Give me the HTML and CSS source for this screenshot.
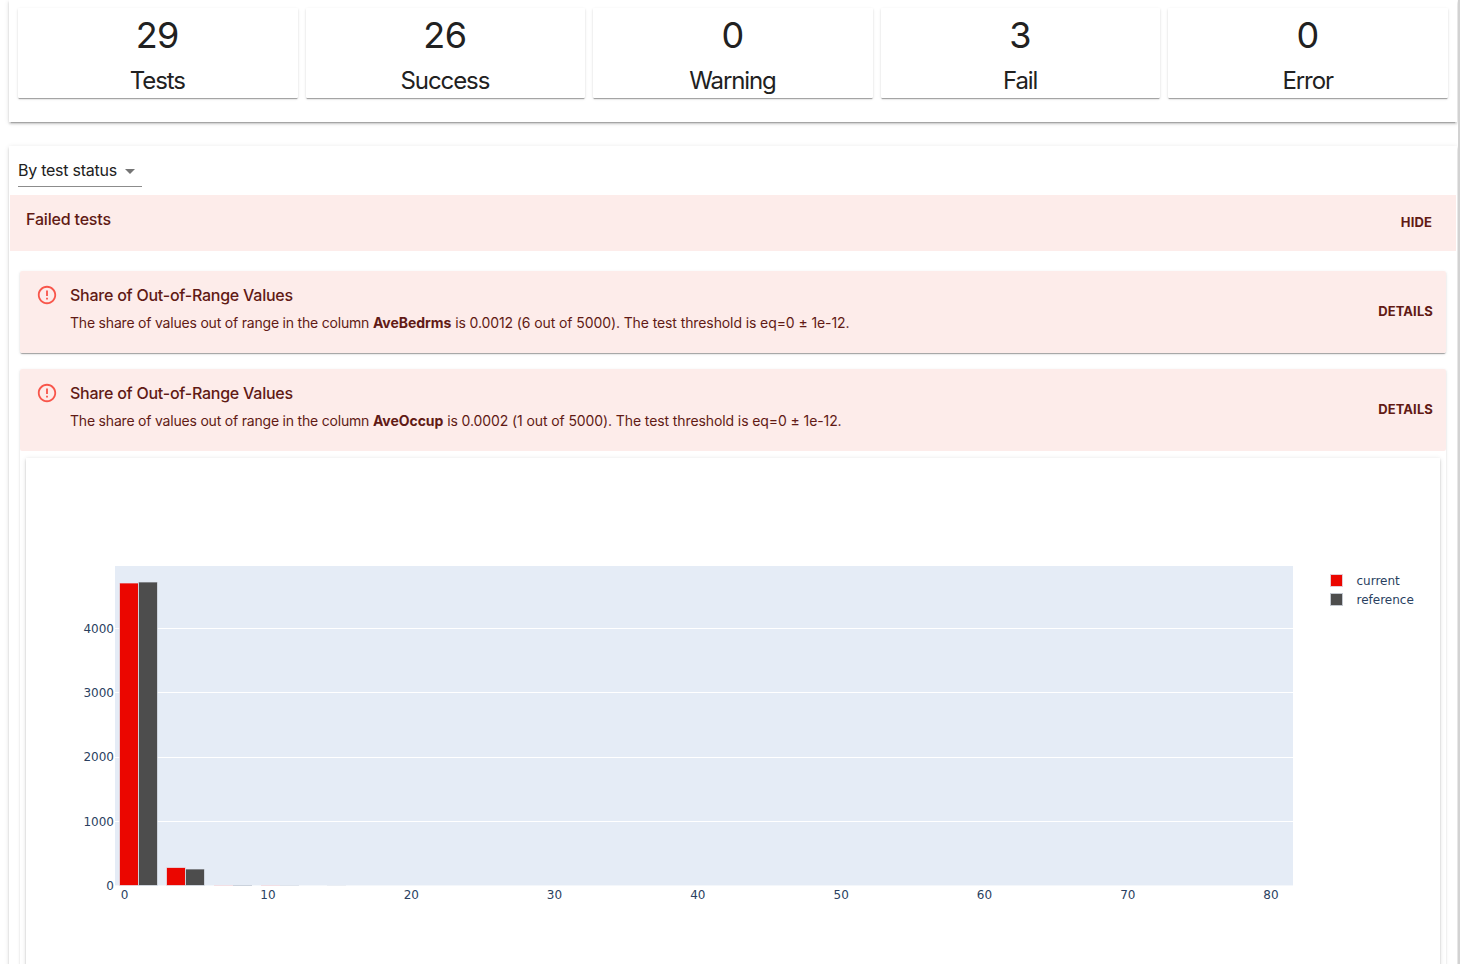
FILE: index.html
```html
<!DOCTYPE html>
<html lang="en">
<head>
<meta charset="utf-8">
<title>Test suite</title>
<link rel="stylesheet" href="styles.css">
</head>
<body>
<div class="page">
  <section class="paper summary">
    <div class="stat"><div class="num">29</div><div class="label">Tests</div></div>
    <div class="stat"><div class="num">26</div><div class="label">Success</div></div>
    <div class="stat"><div class="num">0</div><div class="label">Warning</div></div>
    <div class="stat"><div class="num">3</div><div class="label">Fail</div></div>
    <div class="stat"><div class="num">0</div><div class="label">Error</div></div>
  </section>
  <section class="paper results">
    <div class="select"><span>By test status</span><svg class="caret" width="24" height="24" viewBox="0 0 24 24"><path d="M7 10l5 5 5-5z" fill="#757575"/></svg></div>
    <div class="group-head"><span class="group-title">Failed tests</span><span class="action">HIDE</span></div>
    <div class="tests">
      <article class="test">
        <div class="alert">
          <svg class="icon" width="22" height="22" viewBox="0 0 24 24"><path fill="#f8564b" d="M11 15h2v2h-2zm0-8h2v6h-2zm.99-5C6.47 2 2 6.48 2 12s4.47 10 9.99 10C17.52 22 22 17.52 22 12S17.52 2 11.99 2zM12 20c-4.42 0-8-3.58-8-8s3.58-8 8-8 8 3.58 8 8-3.58 8-8 8z"/></svg>
          <div class="message"><div class="title">Share of Out-of-Range Values</div><div class="desc"><span class="lead">The share of values out of range in the column </span><b>AveBedrms</b> is 0.0012 (6 out of 5000). The test threshold is eq=0 ± 1e-12.</div></div>
          <span class="action">DETAILS</span>
        </div>
      </article>
      <article class="test open">
        <div class="alert">
          <svg class="icon" width="22" height="22" viewBox="0 0 24 24"><path fill="#f8564b" d="M11 15h2v2h-2zm0-8h2v6h-2zm.99-5C6.47 2 2 6.48 2 12s4.47 10 9.99 10C17.52 22 22 17.52 22 12S17.52 2 11.99 2zM12 20c-4.42 0-8-3.58-8-8s3.58-8 8-8 8 3.58 8 8-3.58 8-8 8z"/></svg>
          <div class="message"><div class="title">Share of Out-of-Range Values</div><div class="desc"><span class="lead">The share of values out of range in the column </span><b>AveOccup</b> is 0.0002 (1 out of 5000). The test threshold is eq=0 ± 1e-12.</div></div>
          <span class="action">DETAILS</span>
        </div>
        <div class="plot">
          <svg class="chart" width="1414" height="600" viewBox="26 458 1414 600">
            <rect x="115" y="566" width="1178" height="319" fill="#e5ecf6"/>
            <path d="M115 628.5H1293M115 692.5H1293M115 757.5H1293M115 821.5H1293" stroke="#fff"/>
            <path d="M115 885.5H1293" stroke="#f4f7fb"/>
            <g stroke="#e5ecf6" stroke-opacity=".7">
              <rect x="119.5" y="583" width="19" height="302.5" fill="#eb0600"/>
              <rect x="138.5" y="582" width="19" height="303.5" fill="#4d4d4d"/>
              <rect x="166.5" y="867.5" width="19" height="18" fill="#eb0600"/>
              <rect x="185.5" y="869" width="19" height="16.5" fill="#4d4d4d"/>
            </g>
            <path d="M214 885.5h19M261 885.5h19" stroke="#f3dfe4"/>
            <path d="M233 885.5h19" stroke="#cbd2dc"/>
            <path d="M280 885.5h19" stroke="#dfe4ec"/>
            <path d="M327 885.5h19" stroke="#eaeef4"/>
            <g class="ticks" text-anchor="end">
              <text x="114" y="633">4000</text><text x="114" y="697">3000</text><text x="114" y="761">2000</text><text x="114" y="826">1000</text><text x="114" y="890">0</text>
            </g>
            <g class="ticks" text-anchor="middle">
              <text x="124.5" y="899">0</text><text x="268" y="899">10</text><text x="411.3" y="899">20</text><text x="554.5" y="899">30</text><text x="697.8" y="899">40</text><text x="841.2" y="899">50</text><text x="984.5" y="899">60</text><text x="1127.8" y="899">70</text><text x="1271" y="899">80</text>
            </g>
            <rect x="1330.5" y="574.5" width="12" height="12" fill="#eb0600" stroke="#e5ccd4"/>
            <rect x="1330.5" y="593.5" width="12" height="12" fill="#4d4d4d" stroke="#c3c8d0"/>
            <g class="ticks"><text x="1356.5" y="585">current</text><text x="1356.5" y="604">reference</text></g>
          </svg>
        </div>
      </article>
    </div>
  </section>
</div>
</body>
</html>
```
FILE: styles.css
```css
* { box-sizing: border-box; }
body { margin: 0; font-family: Inter, "Liberation Sans", sans-serif; color: #212121; background: #fff; }
.page { width: 1460px; height: 964px; padding: 0 1px 0 9px; overflow: hidden; border-right: 2px solid #d2d2d2; }
.paper { background: #fff; box-shadow: 0 3px 1px -2px rgba(0,0,0,.2), 0 2px 2px rgba(0,0,0,.14), 0 1px 5px rgba(0,0,0,.12); }
.summary { height: 122px; padding: 8px 9px 24px; display: grid; grid-template-columns: repeat(5, 1fr); gap: 8px; }
.stat { height: 90px; padding-right: 1px; border-radius: 1px; text-align: center; box-shadow: 0 2px 1px -1px rgba(0,0,0,.2), 0 1px 1px rgba(0,0,0,.14), 0 1px 3px rgba(0,0,0,.12); }
.num { font-size: 36px; line-height: 54px; letter-spacing: -.5px; }
.label { font-size: 24px; line-height: 38px; letter-spacing: -1.1px; }
.results { margin-top: 24px; height: 900px; padding-top: 9px; }
.select { margin-left: 9px; width: 124px; height: 32px; display: flex; align-items: center; justify-content: space-between; border-bottom: 1px solid #8c8c8c; font-size: 16px; white-space: nowrap; letter-spacing: -.25px; }
.select span { padding-bottom: 2px; }
.caret { flex: none; }
.group-head { margin: 8px 1px 0; height: 56px; background: #fdecea; color: #611a15; display: flex; justify-content: space-between; padding: 14px 24px 0 16px; }
.group-title { font-size: 16px; line-height: 20px; font-weight: 500; letter-spacing: -.18px; }
.action { font-size: 13px; line-height: 26px; font-weight: 700; letter-spacing: .12px; color: #611a15; }
.tests { padding: 20px 11px 0; display: flex; flex-direction: column; gap: 16px; }
.test { height: 82px; border-radius: 2px; box-shadow: 0 2px 1px -1px rgba(0,0,0,.2), 0 1px 1px rgba(0,0,0,.14), 0 1px 3px rgba(0,0,0,.12); }
.open { height: 700px; }
.alert { height: 82px; background: #fdecea; color: #611a15; border-radius: 2px; display: flex; padding: 13px 13px 0 16px; }
.icon { flex: none; }
.message { flex: 1; margin-left: 12px; white-space: nowrap; }
.title { font-size: 16px; line-height: 22px; font-weight: 500; letter-spacing: -.24px; }
.desc { font-size: 14px; line-height: 20px; margin-top: 7px; letter-spacing: -.1px; }
.lead { letter-spacing: -.2px; }
.desc b { font-weight: 700; letter-spacing: -.05px; }
.alert .action { margin-top: 14px; }
.plot { margin: 7px 6px 0; height: 600px; box-shadow: 0 2px 2px -1px rgba(0,0,0,.2), 0 1px 2px rgba(0,0,0,.14), 0 1px 5px rgba(0,0,0,.12); }
.chart { display: block; }
.ticks { font-family: "DejaVu Sans", sans-serif; font-size: 12px; fill: #2a3f5f; }
```
